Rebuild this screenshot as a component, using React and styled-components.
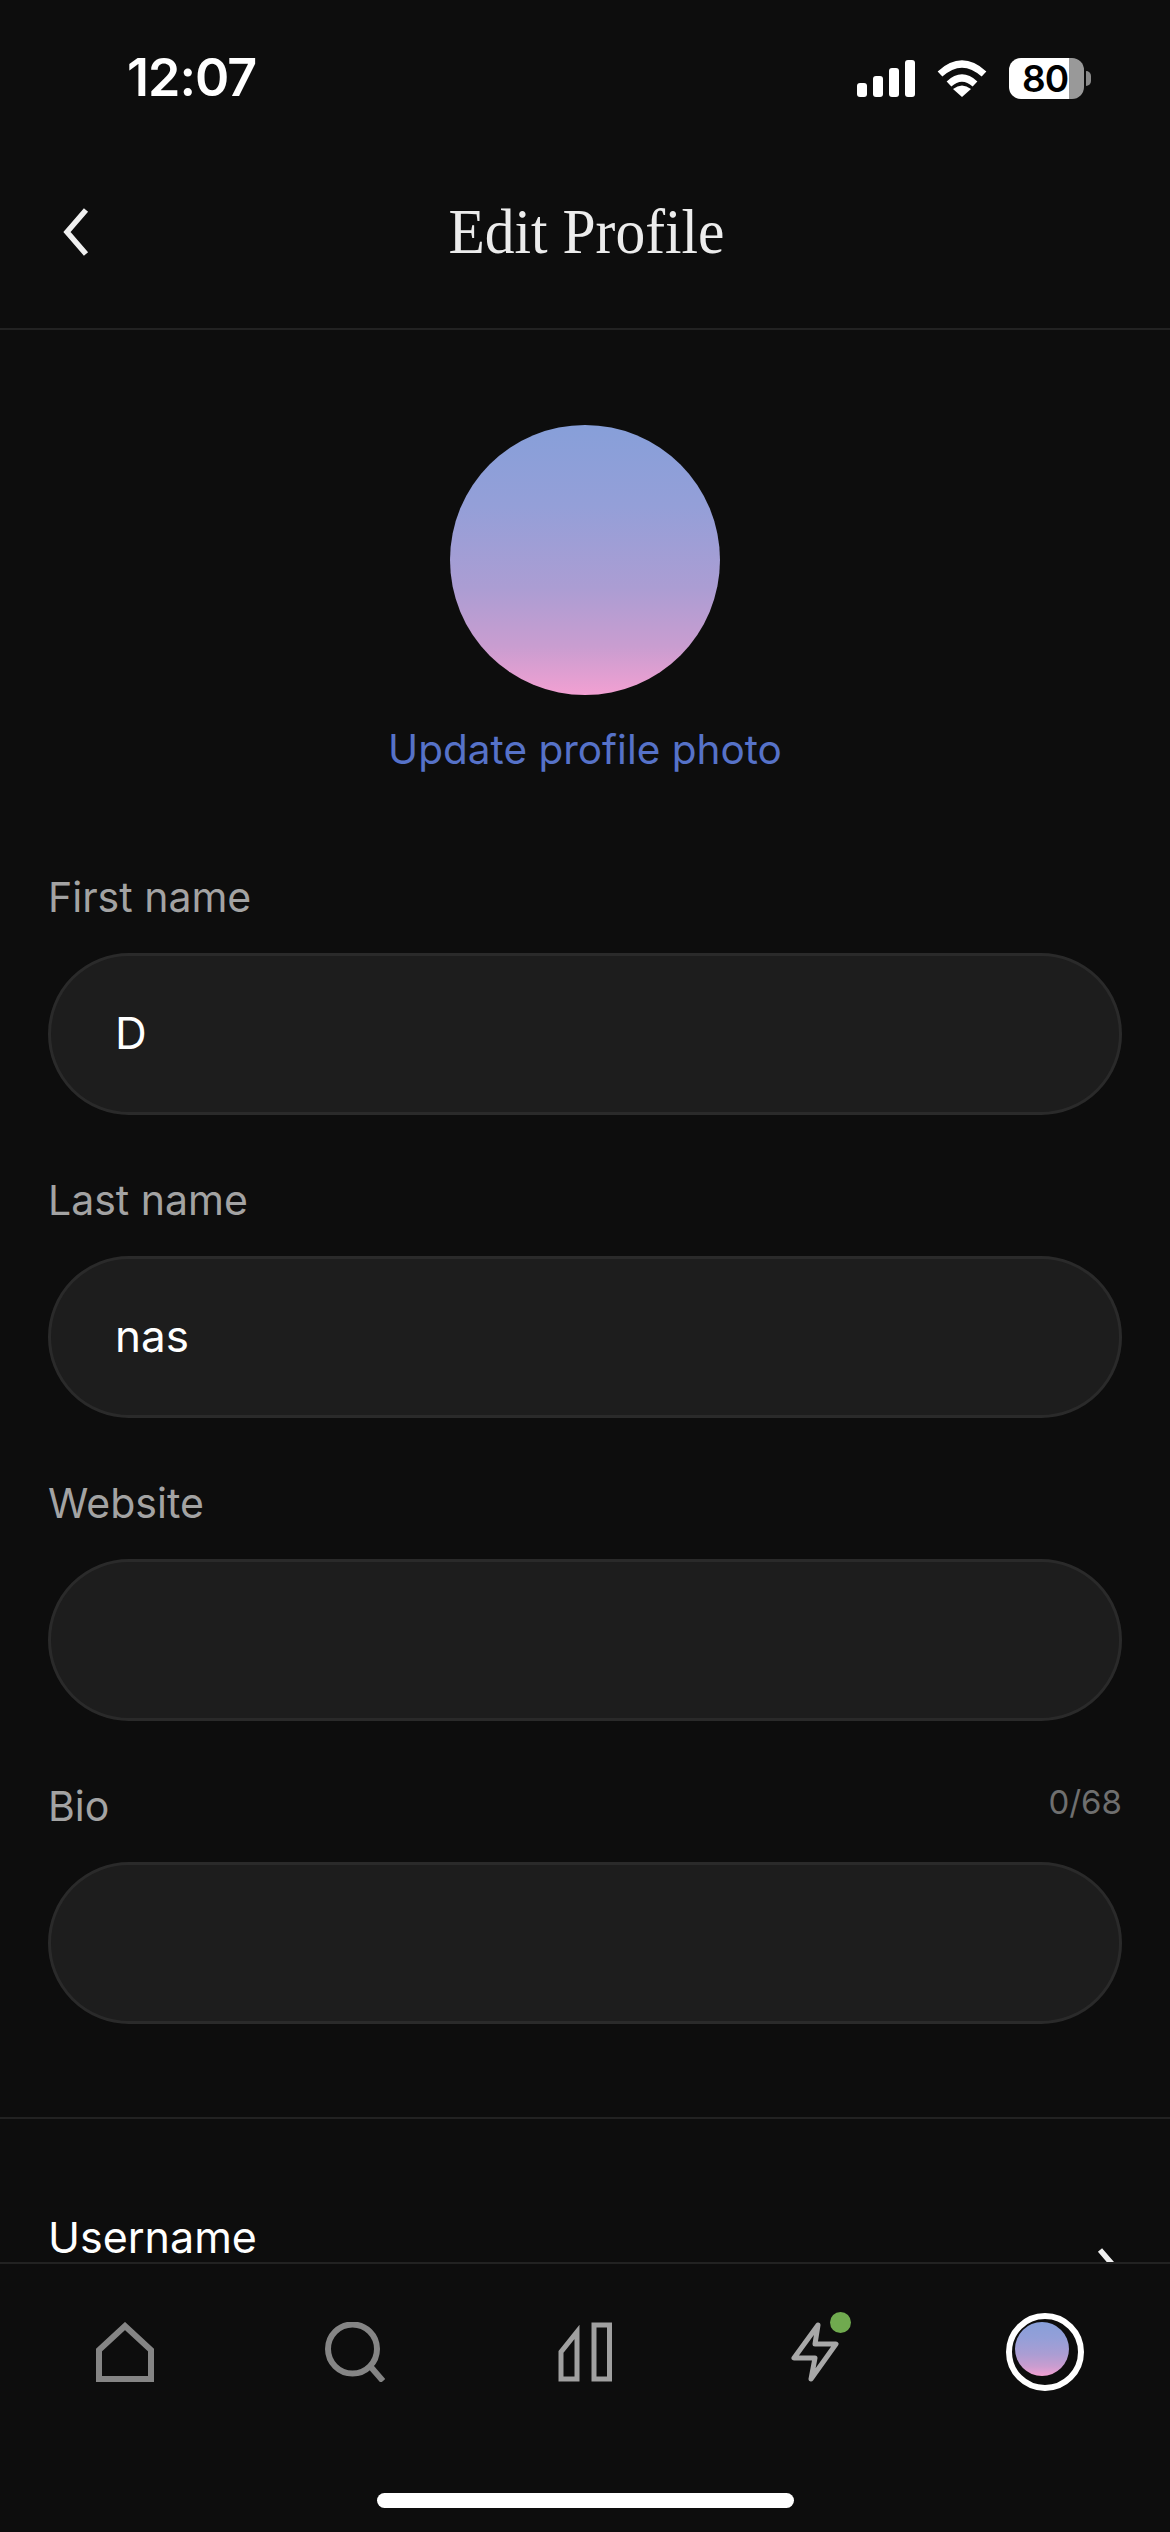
import styled, { createGlobalStyle } from 'styled-components'

const GlobalStyle = createGlobalStyle`
  html, body {
    margin: 0;
    padding: 0;
    background-color: #0d0d0d;
  }
`

const Screen = styled.div`
  width: 1170px;
  height: 2532px;
  display: flex;
  flex-direction: column;
  overflow: hidden;
  background-color: #0d0d0d;
  color: #fff;
  font-family: Inter, "Liberation Sans", sans-serif;
`

const StatusBar = styled.div`
  height: 120px;
  box-sizing: border-box;
  padding: 38px 79px 0 127px;
  display: flex;
  justify-content: space-between;
  align-items: flex-start;
  flex-shrink: 0;
`

const Time = styled.div`
  font-size: 52px;
  font-weight: 600;
  line-height: 80px;
  letter-spacing: -1px;
`

const StatusIcons = styled.div`
  display: flex;
  align-items: center;
  gap: 22px;
  height: 80px;
`

const Battery = styled.div`
  position: relative;
  width: 75px;
  height: 41px;
  margin-right: 7px;
  border-radius: 12px;
  background: linear-gradient(to right, #fff 80%, #999 80%);
  color: #000;
  font-size: 37px;
  font-weight: 600;
  line-height: 41px;
  padding-left: 13px;
  box-sizing: border-box;
  white-space: nowrap;
  letter-spacing: -1px;

  &::after {
    content: '';
    position: absolute;
    left: 77px;
    top: 13px;
    width: 5px;
    height: 15px;
    border-radius: 0 8px 8px 0;
    background-color: #8a8a8a;
  }
`

const Header = styled.div`
  height: 210px;
  box-sizing: border-box;
  padding: 16px 56px 0 58px;
  display: grid;
  grid-template-columns: 1fr auto 1fr;
  align-items: center;
  border-bottom: 2px solid #222;
  flex-shrink: 0;
`

const Title = styled.div`
  font-family: "Liberation Serif", serif;
  font-size: 64px;
  font-weight: 400;
  color: #ececec;
  transform: scaleX(0.93);
`

const Main = styled.div`
  flex: 1;
  min-height: 0;
  overflow: hidden;
`

const PhotoSection = styled.div`
  display: flex;
  flex-direction: column;
  align-items: center;
  padding-top: 95px;
`

const Avatar = styled.div`
  width: ${props => props.$size}px;
  height: ${props => props.$size}px;
  border-radius: 50%;
  background: linear-gradient(to bottom, #879fd9 0%, #949fd8 30%, #ab9dd3 60%, #c99dd0 82%, #f2a0d2 100%);
`

const PhotoLink = styled.div`
  margin-top: 30px;
  font-size: 40.5px;
  line-height: 50px;
  color: #5672c8;
`

const Form = styled.div`
  padding: 97px 48px 0;
  display: flex;
  flex-direction: column;
  gap: 60px;
`

const Field = styled.div`
  display: flex;
  flex-direction: column;
`

const LabelRow = styled.div`
  display: flex;
  justify-content: space-between;
  align-items: flex-start;
  height: 81px;
`

const Label = styled.div`
  font-size: 41px;
  line-height: 50px;
  color: #a3a3a3;
`

const Counter = styled.div`
  font-size: 33px;
  line-height: 42px;
  color: #6f6f6f;
`

const InputBox = styled.div`
  height: 162px;
  box-sizing: border-box;
  border: 3px solid #2a2a2a;
  border-radius: 81px;
  background-color: #1d1d1d;
  padding: 0 64px 3px;
  display: flex;
  align-items: center;
  font-size: 44px;
  color: #fff;
`

const Divider = styled.div`
  margin-top: 93px;
  height: 2px;
  background-color: #222;
`

const LinkRow = styled.div`
  padding: 92px 42px 0 48px;
  display: flex;
  justify-content: space-between;
`

const LinkLabel = styled.div`
  font-size: 43px;
  line-height: 52px;
  color: #fff;
`

const RowChevron = styled.svg`
  margin-top: 36px;
`

const TabBar = styled.div`
  height: 270px;
  box-sizing: border-box;
  flex-shrink: 0;
  border-top: 2px solid #222;
  display: flex;
  flex-direction: column;
  align-items: center;
`

const Tabs = styled.div`
  align-self: stretch;
  height: 78px;
  margin-top: 49px;
  padding: 0 10px;
  display: grid;
  grid-template-columns: repeat(5, 1fr);
`

const Tab = styled.div`
  position: relative;
  display: flex;
  align-items: center;
  justify-content: center;
`

const Dot = styled.span`
  position: absolute;
  left: 130px;
  top: -1px;
  width: 21px;
  height: 21px;
  border-radius: 50%;
  background-color: #70aa4f;
`

const ProfileRing = styled.div`
  width: 78px;
  height: 78px;
  box-sizing: border-box;
  border: 6px solid #fff;
  border-radius: 50%;
  padding: 3px;
  background-color: #0d0d0d;
`

const HomeIndicator = styled.div`
  width: 417px;
  height: 15px;
  margin-top: 102px;
  border-radius: 8px;
  background-color: #fff;
`

const fields = [
  { label: 'First name', value: 'D' },
  { label: 'Last name', value: 'nas' },
  { label: 'Website', value: '' },
  { label: 'Bio', value: '', counter: '0/68' }
]

const SignalIcon = () => (
  <svg width="58" height="37" viewBox="0 0 58 37" fill="#fff">
    <rect x="0" y="23" width="10" height="14" rx="3" />
    <rect x="16" y="16" width="10" height="21" rx="3" />
    <rect x="32" y="8" width="10" height="29" rx="3" />
    <rect x="48" y="0" width="10" height="37" rx="3" />
  </svg>
)

const WifiIcon = () => (
  <svg width="50" height="37" viewBox="0 0 50 37" fill="none">
    <path d="M3 14 Q25 -6 47 14" stroke="#fff" strokeWidth="7" />
    <path d="M12 24 Q25 12 38 24" stroke="#fff" strokeWidth="7" />
    <path d="M25 37 L16 29 Q25 22 34 29 Z" fill="#fff" />
  </svg>
)

const BackIcon = () => (
  <svg width="32" height="50" viewBox="0 0 32 50" fill="none">
    <path d="M28 3 L9 25 L28 47" stroke="#f0f0f0" strokeWidth="5.5" />
  </svg>
)

const HomeIcon = () => (
  <svg width="58" height="60" viewBox="0 0 58 60" fill="none">
    <path d="M3 57 V28 L29 4 L55 28 V57 Z" stroke="#858585" strokeWidth="6" />
  </svg>
)

const SearchIcon = () => (
  <svg width="60" height="60" viewBox="0 0 60 60" fill="none">
    <circle cx="27.5" cy="27" r="24.5" stroke="#858585" strokeWidth="6" />
    <path d="M45 44 L58 59" stroke="#858585" strokeWidth="6" />
  </svg>
)

const ReadsIcon = () => (
  <svg width="54" height="60" viewBox="0 0 54 60" fill="none">
    <path d="M19 10 V57 H3 V30 Z" stroke="#a0a0a0" strokeWidth="5" />
    <rect x="36" y="3" width="15.5" height="54" stroke="#a0a0a0" strokeWidth="5" />
  </svg>
)

const BoltIcon = () => (
  <svg width="48" height="60" viewBox="0 0 48 60" fill="none">
    <path
      d="M27 3 L3 36 H24 L20 57 L45 22 H24 Z"
      stroke="#a8a8a8"
      strokeWidth="5"
      strokeLinejoin="round"
    />
  </svg>
)

const App = () => {
  return (
    <Screen>
      <GlobalStyle />
      <StatusBar>
        <Time>12:07</Time>
        <StatusIcons>
          <SignalIcon />
          <WifiIcon />
          <Battery>80</Battery>
        </StatusIcons>
      </StatusBar>

      <Header>
        <BackIcon />
        <Title>Edit Profile</Title>
      </Header>

      <Main>
        <PhotoSection>
          <Avatar $size={270} />
          <PhotoLink>Update profile photo</PhotoLink>
        </PhotoSection>

        <Form>
          {fields.map((field) => (
            <Field key={field.label}>
              <LabelRow>
                <Label>{field.label}</Label>
                {field.counter && <Counter>{field.counter}</Counter>}
              </LabelRow>
              <InputBox>{field.value}</InputBox>
            </Field>
          ))}
        </Form>

        <Divider />

        <LinkRow>
          <LinkLabel>Username</LinkLabel>
          <RowChevron width="32" height="50" viewBox="0 0 32 50" fill="none">
            <path d="M4 3 L23 25 L4 47" stroke="#f0f0f0" strokeWidth="5.5" />
          </RowChevron>
        </LinkRow>
      </Main>

      <TabBar>
        <Tabs>
          <Tab><HomeIcon /></Tab>
          <Tab><SearchIcon /></Tab>
          <Tab><ReadsIcon /></Tab>
          <Tab>
            <BoltIcon />
            <Dot />
          </Tab>
          <Tab>
            <ProfileRing>
              <Avatar $size={54} />
            </ProfileRing>
          </Tab>
        </Tabs>
        <HomeIndicator />
      </TabBar>
    </Screen>
  )
}

export default App
